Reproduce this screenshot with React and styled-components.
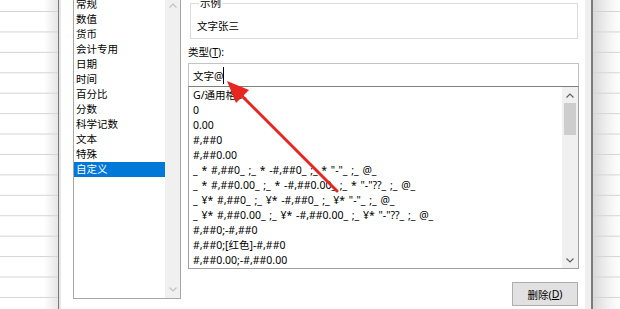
import React from 'react';
import styled, { createGlobalStyle } from 'styled-components';

const GlobalStyle = createGlobalStyle`
  html, body {
    margin: 0;
    padding: 0;
    background: #fff;
    overflow: hidden;
  }
  body {
    font-family: "Noto Sans", "Noto Sans CJK SC", sans-serif;
    color: #000;
  }
`;

const Screen = styled.div`
  position: relative;
  display: flex;
  width: 620px;
  height: 309px;
  overflow: hidden;
`;

const Sheet = styled.div`
  flex: none;
  width: ${p => p.$w}px;
  height: 100%;
  box-sizing: border-box;
  border-left: ${p => (p.$side === 'right' ? '2px solid #7c7c7c' : 'none')};
  border-right: ${p => (p.$side === 'left' ? '1px solid #7a7a7a' : 'none')};
  background:
    linear-gradient(to bottom, transparent 19.43px, #d4d4d4 19.43px) 0 -8.43px / 100% 20.43px repeat-y,
    ${p =>
      p.$side === 'left'
        ? 'linear-gradient(to right, #fff 0, #fff 44px, #e6e6e6 58px)'
        : 'linear-gradient(to right, #d9d9d9 0, #f3f3f3 16px, #fff 27px)'};
`;

const Dialog = styled.div`
  flex: 1;
  min-width: 0;
  height: 100%;
  box-sizing: border-box;
  border-left: 2px solid #e6e6e6;
  border-right: 6px solid #efefef;
  padding: 0 6px 0 12px;
  background: #fff;
`;

const Body = styled.div`
  display: flex;
  gap: 7px;
  margin-top: -4px;
`;

const CategoryBox = styled.div`
  flex: none;
  display: flex;
  width: 108px;
  height: 303px;
  box-sizing: border-box;
  border: 1px solid #a7a7a7;
  background: #fff;
`;

const Items = styled.div`
  flex: 1;
  min-width: 0;
  padding-top: ${p => p.$pt || 0}px;
  word-spacing: ${p => p.$ws || 0}px;
`;

const Item = styled.div`
  height: 15px;
  line-height: 15px;
  padding-left: ${p => p.$pl}px;
  font-size: 10.5px;
  white-space: pre;
  overflow: hidden;
  background: ${p => (p.$selected ? '#0078d7' : 'transparent')};
  color: ${p => (p.$selected ? '#fff' : '#000')};
`;

const Scrollbar = styled.div`
  flex: none;
  width: ${p => p.$w}px;
  display: flex;
  flex-direction: column;
  background: #f0f0f0;
`;

const ArrowBtn = styled.div`
  flex: none;
  height: ${p => p.$h}px;
  display: flex;
  align-items: center;
  justify-content: center;
`;

const Track = styled.div`
  flex: 1;
  display: flex;
  flex-direction: column;
  align-items: center;
`;

const Thumb = styled.div`
  width: 12px;
  height: 32px;
  background: #cdcdcd;
`;

const RightCol = styled.div`
  flex: 1;
  min-width: 0;
  display: flex;
  flex-direction: column;
`;

const Group = styled.fieldset`
  margin: 0 1px 0 2px;
  padding: 9px 6px 4px 6px;
  border: 1px solid #dcdcdc;
  min-width: 0;
`;

const Legend = styled.legend`
  margin-left: 2px;
  padding: 0 1px;
  font-size: 10.5px;
  line-height: 14px;
`;

const Sample = styled.div`
  font-size: 10.5px;
  line-height: 15px;
`;

const Label = styled.div`
  margin: 6px 0 3px;
  font-size: 10.5px;
  line-height: 15px;
`;

const Key = styled.span`
  text-decoration: underline;
  text-underline-offset: 1px;
`;

const Input = styled.div`
  height: 23px;
  box-sizing: border-box;
  border: 1px solid #c3c3c3;
  border-bottom: none;
  padding-left: 4px;
  display: flex;
  align-items: center;
  font-size: 10.5px;
`;

const Caret = styled.span`
  display: inline-block;
  width: 1px;
  height: 17px;
  margin-left: 0;
  background: #000;
`;

const TypeBox = styled.div`
  display: flex;
  height: 183px;
  box-sizing: border-box;
  border: 1px solid #a0a0a0;
  border-top-color: #7f7f7f;
`;

const ButtonRow = styled.div`
  display: flex;
  justify-content: flex-end;
  margin-top: 13px;
`;

const Button = styled.div`
  width: 66px;
  height: 24px;
  margin-right: 1px;
  box-sizing: border-box;
  border: 1px solid #adadad;
  background: #e1e1e1;
  display: flex;
  align-items: center;
  justify-content: center;
  font-size: 10.5px;
`;

const Overlay = styled.svg`
  position: absolute;
  left: 0;
  top: 0;
  pointer-events: none;
`;

const Chevron = ({ dir, color }) => (
  <svg width="8" height="5" viewBox="0 0 8 5">
    <polyline
      points={dir === 'up' ? '0.5,4.5 4,1 7.5,4.5' : '0.5,0.5 4,4 7.5,0.5'}
      fill="none"
      stroke={color}
      strokeWidth="1.2"
    />
  </svg>
);

const categories = ['常规', '数值', '货币', '会计专用', '日期', '时间', '百分比', '分数', '科学记数', '文本', '特殊', '自定义'];

const formats = [
  'G/通用格式',
  '0',
  '0.00',
  '#,##0',
  '#,##0.00',
  '_ * #,##0_ ;_ * -#,##0_ ;_ * "-"_ ;_ @_',
  '_ * #,##0.00_ ;_ * -#,##0.00_ ;_ * "-"??_ ;_ @_',
  '_ ¥* #,##0_ ;_ ¥* -#,##0_ ;_ ¥* "-"_ ;_ @_',
  '_ ¥* #,##0.00_ ;_ ¥* -#,##0.00_ ;_ ¥* "-"??_ ;_ @_',
  '#,##0;-#,##0',
  '#,##0;[红色]-#,##0',
  '#,##0.00;-#,##0.00',
];

export default function App() {
  return (
    <>
      <GlobalStyle />
      <Screen>
        <Sheet $w={59} $side="left" />
        <Dialog>
          <Body>
            <CategoryBox>
              <Items>
                {categories.map(c => (
                  <Item key={c} $pl={2} $selected={c === '自定义'}>{c}</Item>
                ))}
              </Items>
              <Scrollbar $w={15}>
                <ArrowBtn $h={17}><Chevron dir="up" color="#c2c2c2" /></ArrowBtn>
                <Track />
                <ArrowBtn $h={17}><Chevron dir="down" color="#c2c2c2" /></ArrowBtn>
              </Scrollbar>
            </CategoryBox>
            <RightCol>
              <Group>
                <Legend>示例</Legend>
                <Sample>文字张三</Sample>
              </Group>
              <Label>类型(<Key>T</Key>):</Label>
              <Input>文字@<Caret /></Input>
              <TypeBox>
                <Items $pt={1} $ws={1}>
                  {formats.map(f => (
                    <Item key={f} $pl={4}>{f}</Item>
                  ))}
                </Items>
                <Scrollbar $w={16}>
                  <ArrowBtn $h={16}><Chevron dir="up" color="#606060" /></ArrowBtn>
                  <Track><Thumb /></Track>
                  <ArrowBtn $h={16}><Chevron dir="down" color="#606060" /></ArrowBtn>
                </Scrollbar>
              </TypeBox>
              <ButtonRow>
                <Button>删除(<Key>D</Key>)</Button>
              </ButtonRow>
            </RightCol>
          </Body>
        </Dialog>
        <Sheet $w={29} $side="right" />
        <Overlay width="620" height="309" viewBox="0 0 620 309">
          <line x1="337" y1="191" x2="240" y2="94" stroke="#e8251f" strokeWidth="3" strokeLinecap="round" />
          <polygon points="227,81 249,90 236,103" fill="#e8251f" />
        </Overlay>
      </Screen>
    </>
  );
}
